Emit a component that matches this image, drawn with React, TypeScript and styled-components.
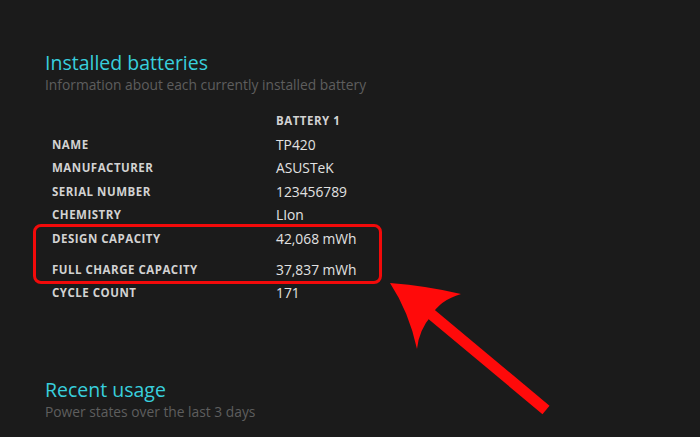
import React from 'react';
import styled, { createGlobalStyle } from 'styled-components';

const GlobalStyle = createGlobalStyle`
    html, body {
        margin: 0;
        padding: 0;
        background: #1b1b1b;
    }
    body {
        font-family: "Open Sans", "Noto Sans", sans-serif;
    }
`;

const Page = styled.div`
    position: relative;
    width: 700px;
    height: 437px;
    overflow: hidden;
    background: #1b1b1b;
    padding: 50px 0 0 45px;
    box-sizing: border-box;
`;

const Section = styled.section<{ $gap?: number }>`
    margin-top: ${(p) => p.$gap || 0}px;
`;

const Title = styled.h2`
    margin: 0;
    font-size: 19.5px;
    font-weight: 400;
    line-height: 26px;
    color: #38cfdd;
`;

const Subtitle = styled.div`
    font-size: 13.8px;
    line-height: 18px;
    color: #5e5e5e;
`;

const Table = styled.div`
    margin: 15px 0 0 7px;
    width: 329px;
`;

const Row = styled.div<{ $offset?: number }>`
    display: grid;
    grid-template-columns: 224px 1fr;
    height: 23.5px;
    align-items: center;
    margin-top: ${(p) => p.$offset || 0}px;
`;

const Label = styled.div`
    font-size: 11.5px;
    font-weight: 700;
    letter-spacing: 0.5px;
    color: #d2d2d2;
`;

const Value = styled.div`
    font-size: 13.8px;
    color: #e2e2e2;
`;

const Highlight = styled.div`
    margin: -3px -1px -3px -19px;
    padding: 0 0 0 16px;
    border: 3px solid #f20a0a;
    border-radius: 8px;
`;

const Overlay = styled.svg`
    position: absolute;
    left: 0;
    top: 0;
    pointer-events: none;
`;

const rows = [
    { label: 'NAME', value: 'TP420' },
    { label: 'MANUFACTURER', value: 'ASUSTeK' },
    { label: 'SERIAL NUMBER', value: '123456789' },
    { label: 'CHEMISTRY', value: 'LIon' },
];

const App = () => {
    return (
        <Page>
            <GlobalStyle />
            <Section>
                <Title>Installed batteries</Title>
                <Subtitle>Information about each currently installed battery</Subtitle>
                <Table>
                    <Row>
                        <div />
                        <Label>BATTERY 1</Label>
                    </Row>
                    {rows.map((r) => (
                        <Row key={r.label}>
                            <Label>{r.label}</Label>
                            <Value>{r.value}</Value>
                        </Row>
                    ))}
                    <Highlight>
                        <Row>
                            <Label>DESIGN CAPACITY</Label>
                            <Value>42,068 mWh</Value>
                        </Row>
                        <Row $offset={7.5}>
                            <Label>FULL CHARGE CAPACITY</Label>
                            <Value>37,837 mWh</Value>
                        </Row>
                    </Highlight>
                    <Row>
                        <Label>CYCLE COUNT</Label>
                        <Value>171</Value>
                    </Row>
                </Table>
            </Section>
            <Section $gap={72}>
                <Title>Recent usage</Title>
                <Subtitle>Power states over the last 3 days</Subtitle>
            </Section>

            <Overlay width="700" height="437" viewBox="0 0 700 437">
                <line x1="431" y1="314" x2="546" y2="410" stroke="#ff0a0a" strokeWidth="11" />
                <path
                    d="M390,283 Q428,286 461,294 Q440,300 431,316 Q419,330 417,349 Q409,312 390,283 Z"
                    fill="#ff0a0a"
                />
            </Overlay>
        </Page>
    );
};

export default App;
